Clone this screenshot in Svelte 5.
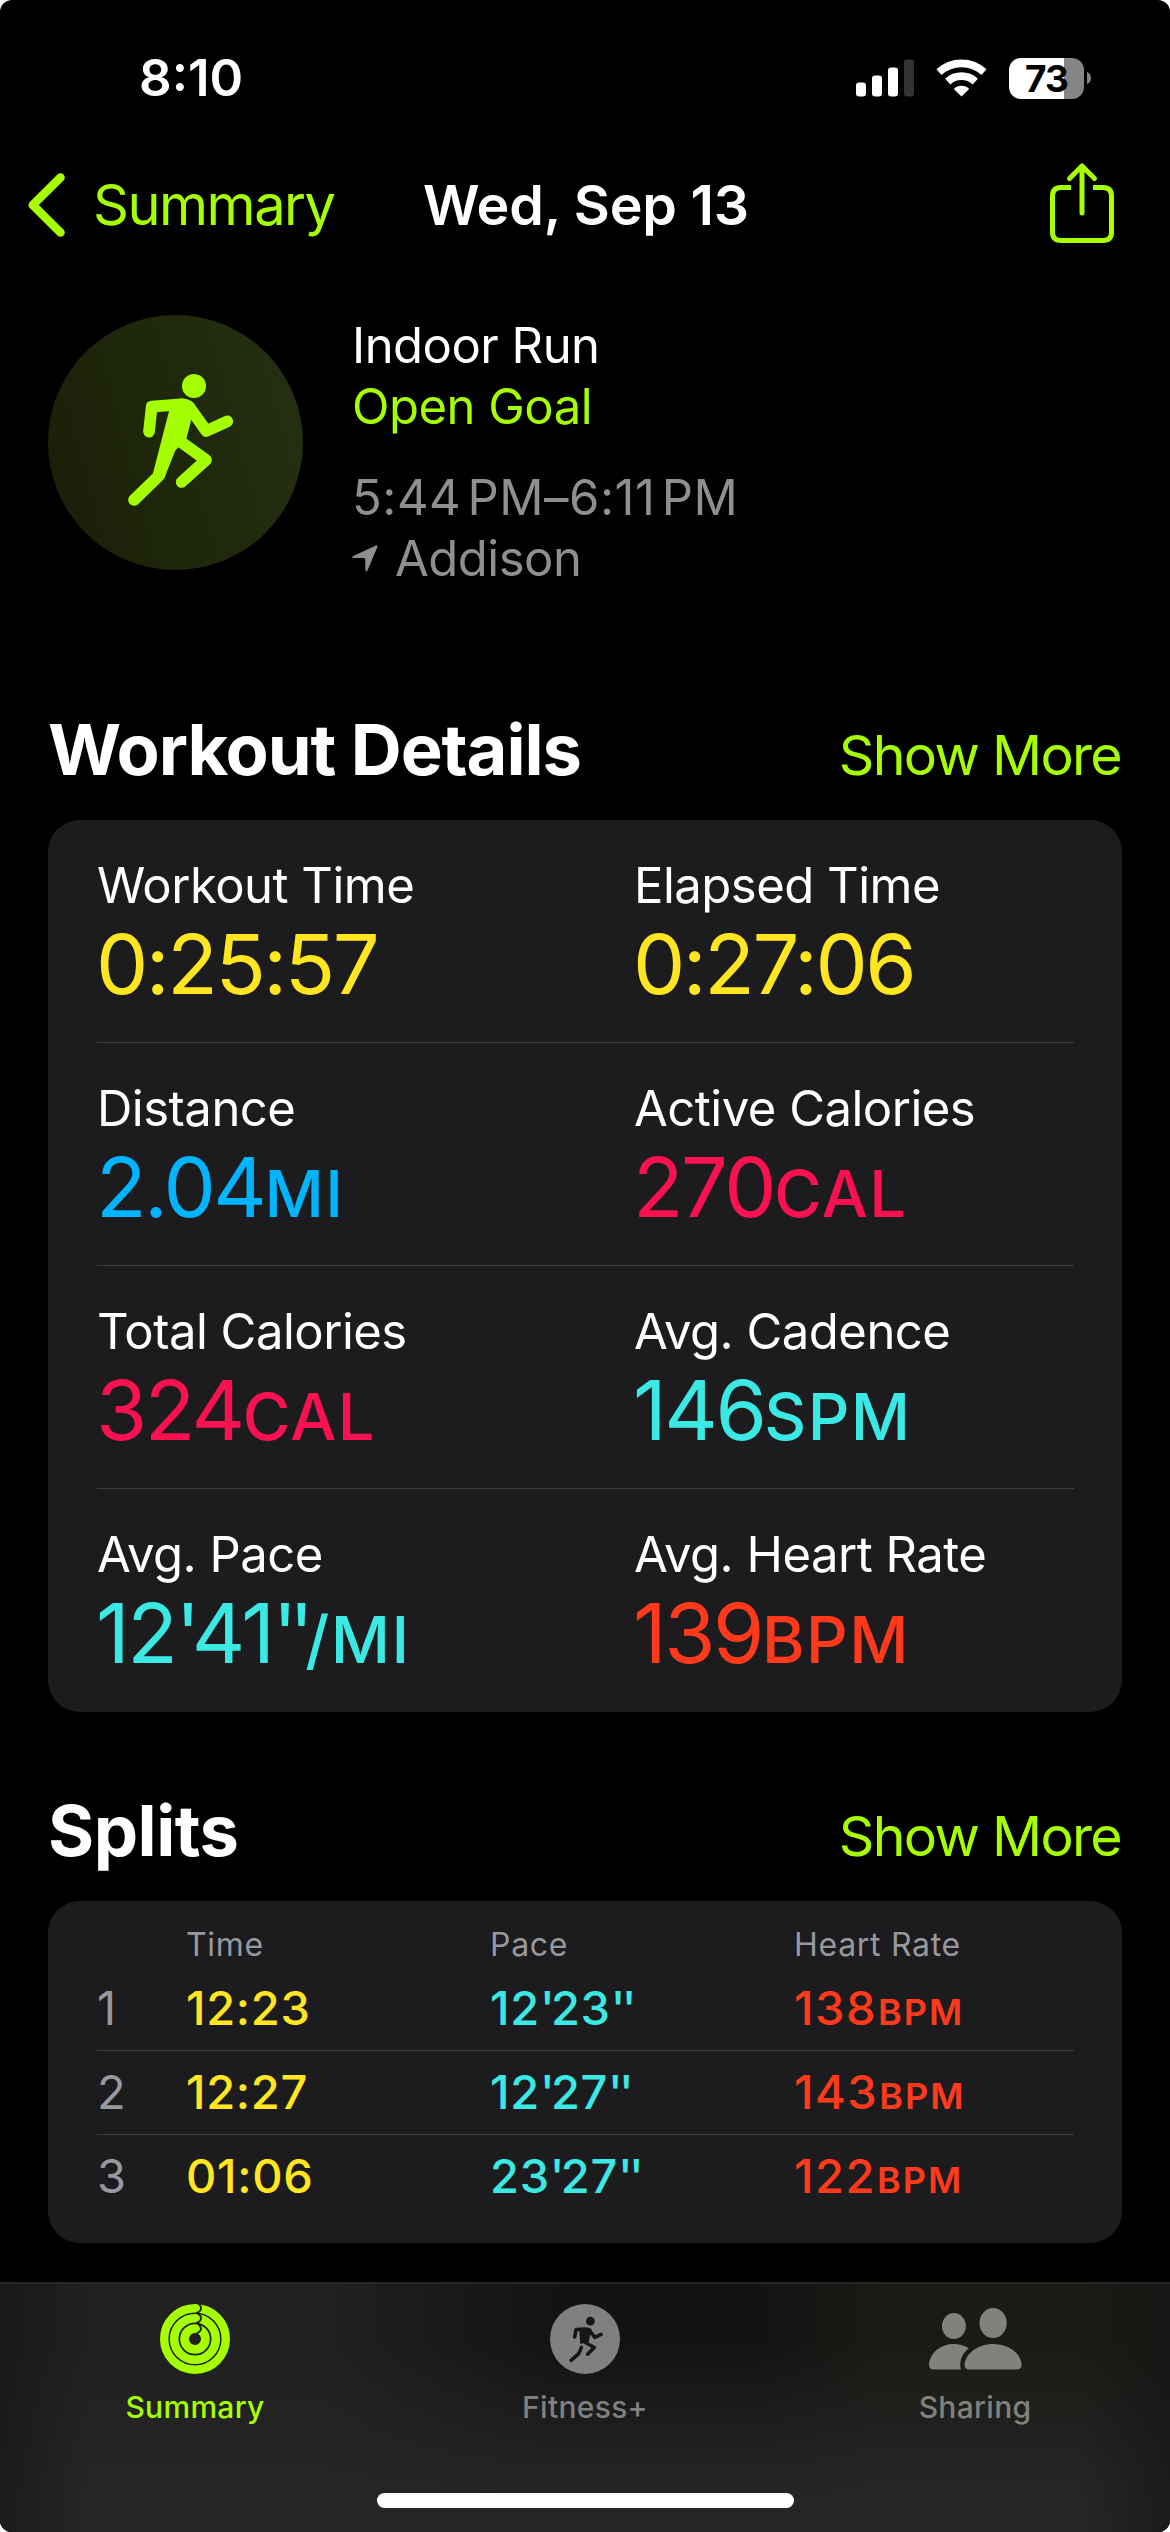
<script>
  const metrics = [
    [
      { label: 'Workout Time', value: '0:25:57', unit: '', tone: 'yellow' },
      { label: 'Elapsed Time', value: '0:27:06', unit: '', tone: 'yellow' }
    ],
    [
      { label: 'Distance', value: '2.04', unit: 'MI', tone: 'blue' },
      { label: 'Active Calories', value: '270', unit: 'CAL', tone: 'pink' }
    ],
    [
      { label: 'Total Calories', value: '324', unit: 'CAL', tone: 'pink' },
      { label: 'Avg. Cadence', value: '146', unit: 'SPM', tone: 'cyan' }
    ],
    [
      { label: 'Avg. Pace', value: "12'41''", unit: '/MI', tone: 'cyan' },
      { label: 'Avg. Heart Rate', value: '139', unit: 'BPM', tone: 'red' }
    ]
  ];

  const splits = [
    { n: 1, time: '12:23', pace: "12'23''", hr: 138 },
    { n: 2, time: '12:27', pace: "12'27''", hr: 143 },
    { n: 3, time: '01:06', pace: "23'27''", hr: 122 }
  ];

  // Separates runs of digits from minute/second marks so the marks can be set tighter.
  const runs = (value) => value.split(/('+)/).filter(Boolean);
</script>

{#snippet figure(value)}{#each runs(value) as part}<span class:tick={part.startsWith("'")}>{part}</span>{/each}{/snippet}

{#snippet runner()}
  <circle cx="252" cy="108" r="36" fill="currentColor" />
  <path d="M178 180 L205 147 Q240 140 258 170 L243 212 L228 270 L192 305 L163 385 L129 370 Z" fill="currentColor" />
  <g fill="none" stroke="currentColor" stroke-width="35" stroke-linecap="round" stroke-linejoin="round">
    <path d="M117 245 L125 170 L215 163" />
    <path d="M237 170 L289 243 L352 214" />
    <path d="M208 272 L288 330 L215 396" />
    <path d="M190 270 L146 378 L72 450" />
  </g>
{/snippet}

<div class="screen">
  <header class="status">
    <span class="clock">8:10</span>
    <div class="indicators">
      <svg class="signal" viewBox="0 0 58 38" aria-hidden="true">
        <rect x="0" y="23.5" width="10" height="14" rx="3" fill="#fff" />
        <rect x="16" y="16.5" width="10" height="21" rx="3" fill="#fff" />
        <rect x="32" y="8.5" width="10" height="29" rx="3" fill="#fff" />
        <rect x="48" y="0.5" width="10" height="37" rx="3" fill="#333" />
      </svg>
      <svg class="wifi" viewBox="-76 -112 152 113" aria-hidden="true">
        <path d="M-67 -73 A99 99 0 0 1 67 -73" fill="none" stroke="#fff" stroke-width="23" />
        <path d="M-41 -45 A61 61 0 0 1 41 -45" fill="none" stroke="#fff" stroke-width="23" />
        <path d="M0 0 L-23 -23 A33 33 0 0 1 23 -23 Z" fill="#fff" />
      </svg>
      <div class="battery">73</div>
      <svg class="nub" viewBox="0 0 4 12" aria-hidden="true"><path d="M0 0 Q4 1.5 4 6 Q4 10.500 0 12 Z" fill="#858585" /></svg>
    </div>
  </header>

  <nav class="nav">
    <div class="back">
      <svg viewBox="0 0 37 64" aria-hidden="true">
        <path d="M32.500 4.500 L4.800 32 L32.500 59.500" fill="none" stroke="currentColor" stroke-width="8.600" stroke-linecap="round" stroke-linejoin="round" />
      </svg>
      <span>Summary</span>
    </div>
    <h1>Wed, Sep 13</h1>
    <svg class="share" viewBox="0 0 64 80" aria-hidden="true">
      <g fill="none" stroke="currentColor" stroke-width="5" stroke-linecap="round" stroke-linejoin="round">
        <path d="M21 24.500 H11 Q2.500 24.500 2.500 33 V69 Q2.500 77.500 11 77.500 H53 Q61.500 77.500 61.500 69 V33 Q61.500 24.500 53 24.500 H43" stroke-linecap="butt" />
        <path d="M32 3 V50 M19.500 15.500 L32 3 L44.500 15.500" />
      </g>
    </svg>
  </nav>

  <section class="hero">
    <div class="badge">
      <svg viewBox="0 0 420 510" aria-hidden="true">{@render runner()}</svg>
    </div>
    <div class="info">
      <p class="kind">Indoor Run</p>
      <p class="goal">Open Goal</p>
      <p class="span">5:44 PM–6:11 PM</p>
      <p class="place">
        <svg viewBox="0 0 26 27" aria-hidden="true"><path d="M24 .6 Q26 0 25.400 2 L15.500 25.500 Q14.300 27.500 13.300 25 V14.500 Q13.200 13 11.800 13 H1.500 Q-1 12.300 1.200 11 Z" fill="currentColor" /></svg>
        <span>Addison</span>
      </p>
    </div>
  </section>

  <div class="heading">
    <h2>Workout Details</h2>
    <span class="more">Show More</span>
  </div>
  <section class="card details">
    {#each metrics as row}
      <div class="row">
        {#each row as m}
          <div class="metric">
            <div class="label">{m.label}</div>
            <div class="value {m.tone}">{@render figure(m.value)}<small>{m.unit}</small></div>
          </div>
        {/each}
      </div>
    {/each}
  </section>

  <div class="heading second">
    <h2>Splits</h2>
    <span class="more">Show More</span>
  </div>
  <section class="card splits">
    <div class="cols head"><span></span><span>Time</span><span>Pace</span><span>Heart Rate</span></div>
    {#each splits as s}
      <div class="cols split">
        <span class="n">{s.n}</span>
        <span class="yellow">{s.time}</span>
        <span class="cyan">{@render figure(s.pace)}</span>
        <span class="red hr">{s.hr}<small>BPM</small></span>
      </div>
    {/each}
  </section>

  <footer class="tabs">
    <div class="items">
      <div class="tab active">
        <svg class="round" viewBox="-35 -35 70 70" aria-hidden="true">
          <g fill="none" stroke="currentColor">
            <circle r="30.800" stroke-width="8.400" />
            <circle r="20.800" stroke-width="8.600" />
            <circle r="10.400" stroke-width="8.800" />
          </g>
          <g fill="none" stroke="#1c260c" stroke-width="1.900">
            <path d="M2.500 -36 Q6 -34 6 -31 Q6 -27.500 1.500 -26" />
            <path d="M2.500 -25.500 Q6 -24 6 -21 Q6 -17.500 1.500 -16" />
            <path d="M2.500 -15.500 Q6 -13 6 -10.500 Q6 -7.500 1.500 -5.500" />
          </g>
        </svg>
        <span>Summary</span>
      </div>
      <div class="tab">
        <svg class="round" viewBox="0 0 70 70" aria-hidden="true">
          <circle cx="35" cy="35" r="35" fill="currentColor" />
          <g class="cut" transform="translate(13.500 6.500) scale(.112)">
            <circle cx="240" cy="95" r="39" fill="currentColor" />
            <path d="M140 162 L200 152 Q240 145 255 180 L238 220 L226 280 L150 300 Z" fill="currentColor" />
            <g fill="none" stroke="currentColor" stroke-width="32" stroke-linecap="round" stroke-linejoin="round">
              <path d="M100 235 L112 170 L190 166" />
              <path d="M232 180 L280 240 L335 214" />
              <path d="M175 275 L275 330 L215 390" />
              <path d="M160 330 L136 385 L68 445" />
            </g>
          </g>
        </svg>
        <span>Fitness+</span>
      </div>
      <div class="tab sharing">
        <svg class="people" viewBox="84 42 280 210" aria-hidden="true">
          <g fill="currentColor">
            <ellipse cx="159" cy="108" rx="36" ry="39" />
            <ellipse cx="277" cy="99" rx="41" ry="45" />
            <path d="M98 239 Q84 239 84 224 C88 185 122 162 159 162 C176 162 192 167 204 175 C184 190 174 213 180 239 Z" />
            <path d="M205 239 Q191 239 191 224 C195 187 235 162 277 162 C320 162 360 187 363 224 Q363 239 348 239 Z" />
          </g>
        </svg>
        <span>Sharing</span>
      </div>
    </div>
    <div class="home"></div>
  </footer>
</div>

<style>
  :global(body) { margin: 0; background: #fff; }
  .screen {
    width: 1170px;
    height: 2532px;
    box-sizing: border-box;
    display: flex;
    flex-direction: column;
    overflow: hidden;
    border-radius: 12px;
    background: #000;
    color: #fff;
    font-family: Inter, "Liberation Sans", sans-serif;
  }
  h1, h2, p { margin: 0; }
  svg { display: block; flex: none; overflow: visible; }
  .yellow { color: #ffe620; }
  .blue { color: #00b4ff; }
  .pink { color: #fa114f; }
  .cyan { color: #3ce8e4; }
  .red { color: #ff3a1c; }

  .status { flex: none; height: 156px; padding: 0 79px 0 139px; display: flex; align-items: center; justify-content: space-between; }
  .clock { font-size: 51px; line-height: 60px; font-weight: 600; letter-spacing: 0; }
  .indicators { display: flex; align-items: center; }
  .signal { width: 58px; height: 38px; margin-right: 22px; }
  .wifi { width: 51px; height: 38px; margin-right: 22px; }
  .battery {
    width: 75px; height: 41px; border-radius: 12px; margin-right: 3px;
    background: linear-gradient(90deg, #fff 55px, #858585 55px);
    color: #000; font-size: 37px; line-height: 41px; font-weight: 700; text-align: center; letter-spacing: -1px;
  }
  .nub { width: 4px; height: 12px; }

  .nav { flex: none; height: 98px; padding: 0 56px 0 28px; display: grid; grid-template-columns: 395px 324px 1fr; align-items: center; color: #a6ff00; }
  .back { display: flex; align-items: center; gap: 28px; font-size: 56px; line-height: 68px; letter-spacing: -1.5px; }
  .back svg { width: 37px; height: 64px; }
  h1 { font-size: 55.5px; line-height: 68px; font-weight: 600; color: #fff; letter-spacing: -.2px; white-space: nowrap; }
  .share { width: 64px; height: 80px; justify-self: end; margin-bottom: 4px; }

  .hero { flex: none; margin-top: 61px; padding-left: 48px; display: flex; gap: 49px; height: 275px; }
  .badge { width: 255px; height: 255px; border-radius: 50%; background: linear-gradient(75deg, #191f07, #263011); display: flex; align-items: center; justify-content: center; color: #a6ff00; }
  .badge svg { width: 140px; height: 170px; margin: 0 0 15px 9px; }
  .info { font-size: 49px; line-height: 61px; letter-spacing: -.5px; }
  .goal { color: #a6ff00; }
  .span { margin-top: 30px; color: #8e8e93; letter-spacing: .5px; word-spacing: -8px; }
  .place { color: #8e8e93; display: flex; align-items: center; gap: 17px; }
  .place svg { width: 26px; height: 27px; }

  .heading { flex: none; height: 84px; margin: 118px 49px 28px 48px; display: flex; justify-content: space-between; align-items: baseline; }
  .heading.second { margin-top: 77px; }
  h2 { font-size: 70.5px; line-height: 84px; font-weight: 700; letter-spacing: -1.1px; }
  .second h2 { letter-spacing: -.5px; }
  .more { font-size: 55.5px; color: #a6ff00; letter-spacing: -1.7px; }

  .card { flex: none; box-sizing: border-box; margin: 0 48px; border-radius: 32px; background: #1c1c1e; }
  .details { height: 892px; }
  .row { position: relative; height: 223px; display: grid; grid-template-columns: 1fr 1fr; }
  .row:not(:last-child)::after, .split:not(:last-child)::after { content: ""; position: absolute; left: 49px; right: 48px; bottom: 0; height: 1px; background: #3d3d40; }
  .metric { padding: 36px 0 0 49px; white-space: nowrap; }
  .label { font-size: 49px; line-height: 60px; letter-spacing: -.5px; }
  .value { margin-top: 6px; margin-left: -1px; font-size: 83px; line-height: 84px; letter-spacing: -2.5px; }
  .value .tick { letter-spacing: -8.5px; }
  .value small { font-size: 65px; letter-spacing: 1.4px; font-weight: 500; }

  .splits { height: 342px; padding-top: 24px; }
  .cols { position: relative; padding-left: 49px; display: grid; grid-template-columns: 89px 304px 304px 1fr; }
  .head { height: 42px; font-size: 32px; line-height: 40px; letter-spacing: .7px; color: #98989f; }
  .split { box-sizing: border-box; height: 84px; padding-top: 13px; font-size: 47px; line-height: 56px; font-weight: 500; letter-spacing: .7px; }
  .split .tick { letter-spacing: -3.7px; }
  .split .hr { letter-spacing: 1.5px; }
  .split small { font-size: 36px; font-weight: 600; letter-spacing: 2px; margin-left: 1px; }
  .n { color: #98989f; font-weight: 400; }

  .tabs {
    flex: none; margin-top: auto; box-sizing: border-box; height: 250px; border-top: 2px solid #272727;
    display: flex; flex-direction: column; align-items: center;
    background:
      linear-gradient(90deg, rgba(20,20,22,.6), transparent 90px, transparent 1080px, rgba(20,20,20,.6)),
      linear-gradient(0deg, #262627, rgba(38,38,39,.9) 50px, rgba(38,38,39,0) 190px),
      linear-gradient(90deg, #202021 0, #202021 330px, #131313 560px, #131313 760px, #191b14 880px, #191b14);
  }
  .items { width: 100%; height: 209px; display: grid; grid-template-columns: repeat(3, 1fr); }
  .tab { display: flex; flex-direction: column; align-items: center; padding-top: 20px; color: #808080; font-size: 30px; line-height: 36px; font-weight: 500; letter-spacing: .3px; }
  .tab span { margin-top: 15px; }
  .tab.active { color: #a6ff00; }
  .tab.sharing { color: #80837c; }
  .cut { color: #161616; }
  .round { width: 70px; height: 70px; }
  .people { width: 93px; height: 70px; }
  .home { width: 417px; height: 15px; border-radius: 8px; background: #fff; }
</style>
